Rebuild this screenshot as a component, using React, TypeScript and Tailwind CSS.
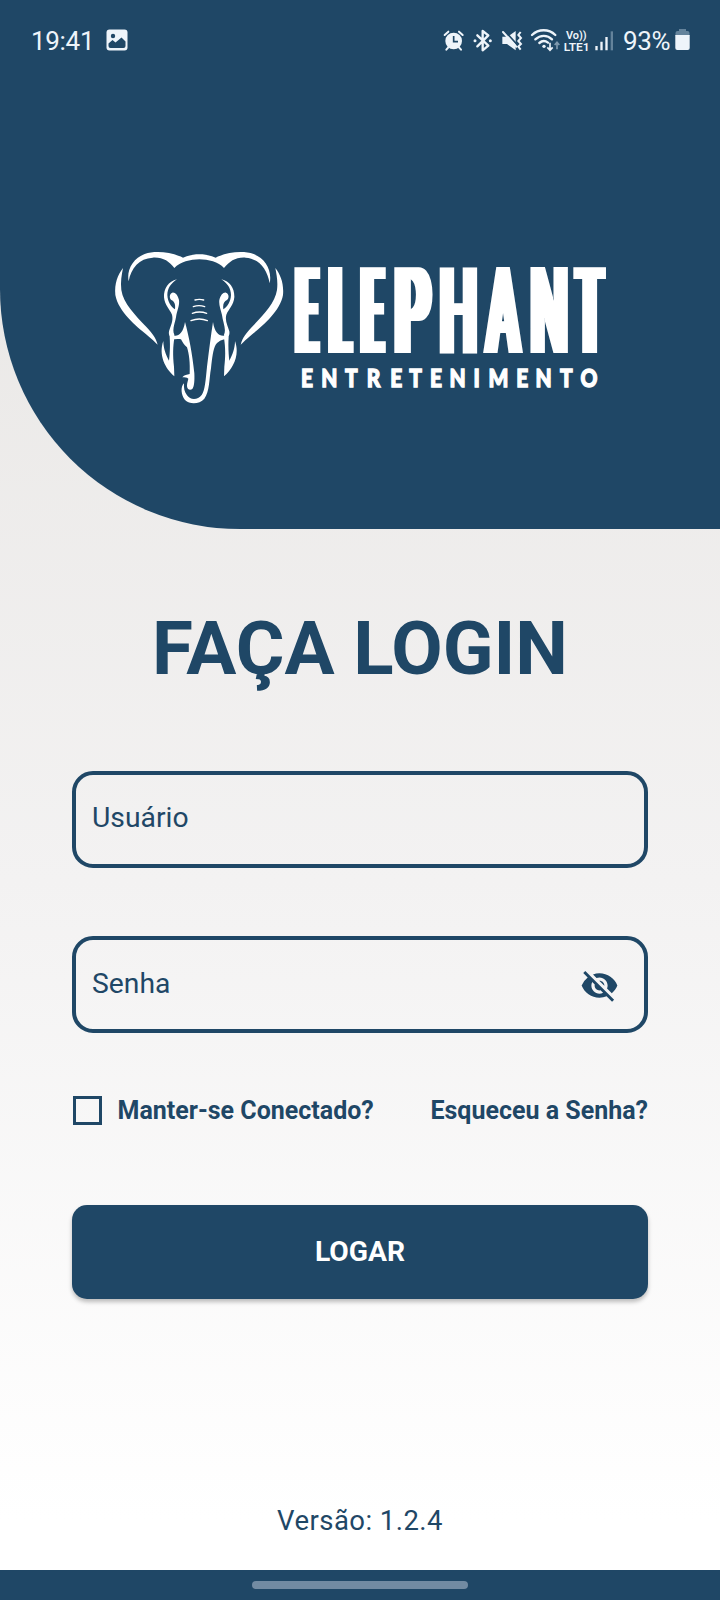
import React, { useState } from "react";
import { MdVisibilityOff } from "react-icons/md";

function StatusIcons() {
  return (
    <svg className="h-[60px] w-[176px]" viewBox="30 0 528 180" fill="#eef4fa">
      {/* alarm */}
      <circle cx="71" cy="93" r="25" />
      <path d="M44 75l11-10M98 75L87 65M55 112l-6 7M87 112l6 7" stroke="#eef4fa" strokeWidth="6" strokeLinecap="round" />
      <path d="M71 78v17h13" fill="none" stroke="#1f4766" strokeWidth="5" />
      {/* bluetooth */}
      <path d="M142 76l33 31-17 14V63l17 13-33 33" fill="none" stroke="#eef4fa" strokeWidth="7" strokeLinejoin="round" strokeLinecap="round" />
      <circle cx="135" cy="92" r="4.500" />
      <circle cx="181" cy="92" r="4.500" />
      {/* muted with vibration */}
      <path d="M217 80h16l24-17v58l-26-19h-14z" />
      <path d="M224 62l42 47" stroke="#1f4766" strokeWidth="5" />
      <path d="M219 66l40 44" stroke="#eef4fa" strokeWidth="6" strokeLinecap="round" />
      <path d="M272 66l-7 9 8 9-8 9 8 9-8 8 7 9" fill="none" stroke="#eef4fa" strokeWidth="6" />
      {/* wifi */}
      <g fill="none" stroke="#eef4fa" strokeWidth="7" strokeLinecap="round">
        <path d="M306 75c20-19 50-19 70 0" />
        <path d="M316 88c15-14 36-14 50 0" />
        <path d="M328 99c8-7 18-7 26-1" />
      </g>
      <circle cx="342" cy="109" r="5" />
      <path d="M360 98v22M352 112l8 9 8-9" fill="none" stroke="#eef4fa" strokeWidth="5" />
      <path d="M381 118V98M374 105l7-8 7 8" fill="none" stroke="#7f99ae" strokeWidth="5" />
      {/* carrier */}
      <text x="408" y="87" fontFamily="Roboto, sans-serif" fontWeight="600" fontSize="31" textLength="62" lengthAdjust="spacingAndGlyphs">Vo))</text>
      <text x="401" y="122" fontFamily="Roboto, sans-serif" fontWeight="600" fontSize="35" textLength="78" lengthAdjust="spacingAndGlyphs">LTE1</text>
      {/* signal */}
      <path d="M496 108h7v13h-7zM511 95h7v26h-7zM526 81h7v40h-7z" />
      <path d="M542 64h7v57h-7z" fill="#64839b" />
    </svg>
  );
}

const half =
  "M54 84C38 105 28 130 31 165C40 215 95 260 125 284C140 296 150 306 158 314C152 292 140 278 125 262C90 225 55 190 49 150C46 125 50 105 54 84Z" +
  "M175 303C160 345 180 385 208 409L207 380C203 345 204 320 208 294L194 290C196 320 194 345 192 362C183 345 175 325 175 303Z" +
  "M216 118C190 124 176 145 177 172C179 195 194 208 201 224C206 243 196 258 192 274C190 286 196 298 206 297L208 284C200 268 212 245 214 225C218 208 224 195 222 180C219 166 210 156 202 158C193 161 192 174 199 180C208 184 212 192 210 208C198 200 188 185 187 165C187 145 198 130 216 118Z";

function ElephantMark() {
  return (
    <svg className="h-[175px] w-[190px] shrink-0" viewBox="0 0 570 525" fill="#fff">
      <path d={half} />
      <path d={half} transform="matrix(-1 0 0 1 565 0)" />
      <path d="M71 124C64 90 84 55 119 42C154 30 204 38 234 53C262 39 304 39 332 53C361 38 411 30 446 42C481 55 502 90 494 130C486 84 460 56 422 53C392 51 374 64 357 84C340 66 310 58 283 58C256 58 226 66 208 84C193 64 173 51 143 53C103 55 78 84 71 124Z" />
      <path d="M200 284C215 292 234 285 240 246C252 290 262 340 268 400C269 420 268 440 262 447C255 452 246 448 246 438C246 428 249 422 250 416C245 412 240 412 232 412C238 404 246 404 254 402C256 370 252 340 246 322C238 316 232 306 228 298C218 296 208 298 200 298Z" />
      <path d="M324 246C318 285 312 330 306 380C302 420 300 450 290 465C278 481 256 481 246 466C238 455 236 444 237 430C226 440 228 466 240 480C256 495 284 492 298 476C314 455 312 420 318 385C322 350 324 330 332 314C340 305 350 297 366 298L368 284C348 292 330 285 324 246Z" />
      <g fill="none" stroke="#fff" strokeWidth="4" strokeLinecap="round">
        <path d="M270 180q13-4 26 0M265 200q17-6 34 0M262 220q22-8 43 0M258 242q25-10 49 0" />
      </g>
    </svg>
  );
}

/* glyph, left edge, horizontal scale, stem filter */
const letters: [string, number, number, string][] = [
  ["E", 296.9, 0.281, "url(#wide)"],
  ["L", 330.6, 0.29, "url(#wide)"],
  ["E", 362.6, 0.281, "url(#wide)"],
  ["P", 395.6, 0.44, "url(#wide)"],
  ["H", 439.9, 0.43, "url(#narrow)"],
  ["A", 486.7, 0.406, "url(#narrow)"],
  ["N", 530.7, 0.43, "url(#narrow)"],
  ["T", 577.6, 0.33, "url(#wide)"],
];

const taglineX = [301, 321.2, 345, 366.8, 390.3, 409.3, 430, 449.6, 473.6, 488.6, 516.3, 535.6, 560, 580.4];

function Wordmark() {
  return (
    <svg className="h-[150px] w-[325px] shrink-0" viewBox="285 250 325 150" fill="#fff">
      <defs>
        <filter id="wide" filterUnits="userSpaceOnUse" x="285" y="250" width="325" height="120">
          <feMorphology operator="dilate" radius="5 0" />
        </filter>
        <filter id="narrow" filterUnits="userSpaceOnUse" x="285" y="250" width="325" height="120">
          <feMorphology operator="dilate" radius="4 0" />
        </filter>
      </defs>
      {letters.map(([c, x, s, f], i) => (
        <g key={i} filter={f}>
          <text transform={`translate(${x} 353) scale(${s} 1)`} fontFamily="Roboto, sans-serif" fontWeight="500" fontSize="121">{c}</text>
        </g>
      ))}
      <text
        x={taglineX.map((x) => (x / 0.87).toFixed(2)).join(" ")}
        y="387"
        transform="scale(0.87 1)"
        fontFamily="Lato, sans-serif"
        fontWeight="900"
        fontSize="24"
        stroke="#fff"
        strokeWidth="1.3"
      >
        ENTRETENIMENTO
      </text>
    </svg>
  );
}

export default function App() {
  const [keep, setKeep] = useState(false);
  return (
    <div className="flex h-[1600px] w-[720px] flex-col overflow-hidden bg-linear-to-b from-[#e9e7e5] from-10% via-[#f3f2f2] via-55% to-white to-95% font-[Roboto,sans-serif] text-[#1f4766]">
      <header className="h-[529px] shrink-0 rounded-bl-[240px] bg-[#1f4766] pt-[10px]">
        <div className="flex h-[60px] items-center pl-[31px] text-[26px] text-[#eef4fa]">
          <span className="w-[62px] pt-0.5 tracking-[-0.3px]">19:41</span>
          <svg className="ml-[13px] size-[22px]" viewBox="0 0 22 22">
            <rect x="0.5" y="0.5" width="21" height="21" rx="3" fill="#eef4fa" />
            <path d="M2.5 17v-2.5l4-3.5 3 2.5 6-5 4 4V17q0 2-2 2h-13q-2 0-2-2z" fill="#1f4766" />
            <circle cx="7" cy="7" r="2.2" fill="#1f4766" />
          </svg>
          <div className="ml-[312px]"><StatusIcons /></div>
          <span className="ml-[7px] w-[49px] pt-0.5 tracking-[-0.4px]">93%</span>
          <svg className="ml-[3px] h-[22px] w-[15px]" viewBox="0 0 15 22">
            <path d="M4 0h7v2h1.500q2 0 2 2v3H.5V4q0-2 2-2H4z" fill="#64839b" />
            <path d="M.3 6h14.400v13q0 2-2 2H2.300q-2 0-2-2z" fill="#eef4fa" />
          </svg>
        </div>
        <div className="flex items-start pl-[105px] pt-[170px]">
          <ElephantMark />
          <div className="-ml-[10px] pt-[10px]"><Wordmark /></div>
        </div>
      </header>

      <main className="flex grow flex-col px-[72px]">
        <h1 className="mt-[76px] text-center text-[74.6px] leading-[88px] font-bold whitespace-nowrap">FAÇA LOGIN</h1>
        <div className="mt-[78px] flex h-[97px] shrink-0 items-center rounded-[21px] border-4 border-[#1f4766] px-4 pb-0.5 text-[28.3px]">Usuário</div>
        <div className="mt-[68px] flex h-[97px] shrink-0 items-center justify-between rounded-[21px] border-4 border-[#1f4766] pr-[25px] pl-4 text-[28.3px]">
          <span className="pb-px">Senha</span>
          <MdVisibilityOff className="mt-px size-[39px]" />
        </div>
        <div className="mt-[62px] flex h-[30px] shrink-0 items-center text-[25px] font-bold whitespace-nowrap">
          <button onClick={() => setKeep(!keep)} className={keep ? "ml-px size-[29px] border-[3px] border-[#1f4766] bg-[#1f4766]" : "ml-px size-[29px] border-[3px] border-[#1f4766]"} />
          <span className="ml-[15.5px] pt-px">Manter-se Conectado?</span>
          <span className="ml-auto pt-px">Esqueceu a Senha?</span>
        </div>
        <button className="mt-[80px] flex h-[94px] shrink-0 items-center justify-center rounded-[15px] bg-[#1f4766] text-[28.2px] font-bold text-white shadow-[0_3px_4px_rgba(0,0,0,0.25)]">LOGAR</button>
        <p className="mt-[206px] text-center text-[27.5px] leading-[32px] tracking-[0.45px]">Versão: 1.2.4</p>
      </main>

      <footer className="flex h-[30px] shrink-0 justify-center bg-[#1f4766] pt-[11px]">
        <div className="h-[8px] w-[216px] rounded-full bg-[#728ba2]" />
      </footer>
    </div>
  );
}
